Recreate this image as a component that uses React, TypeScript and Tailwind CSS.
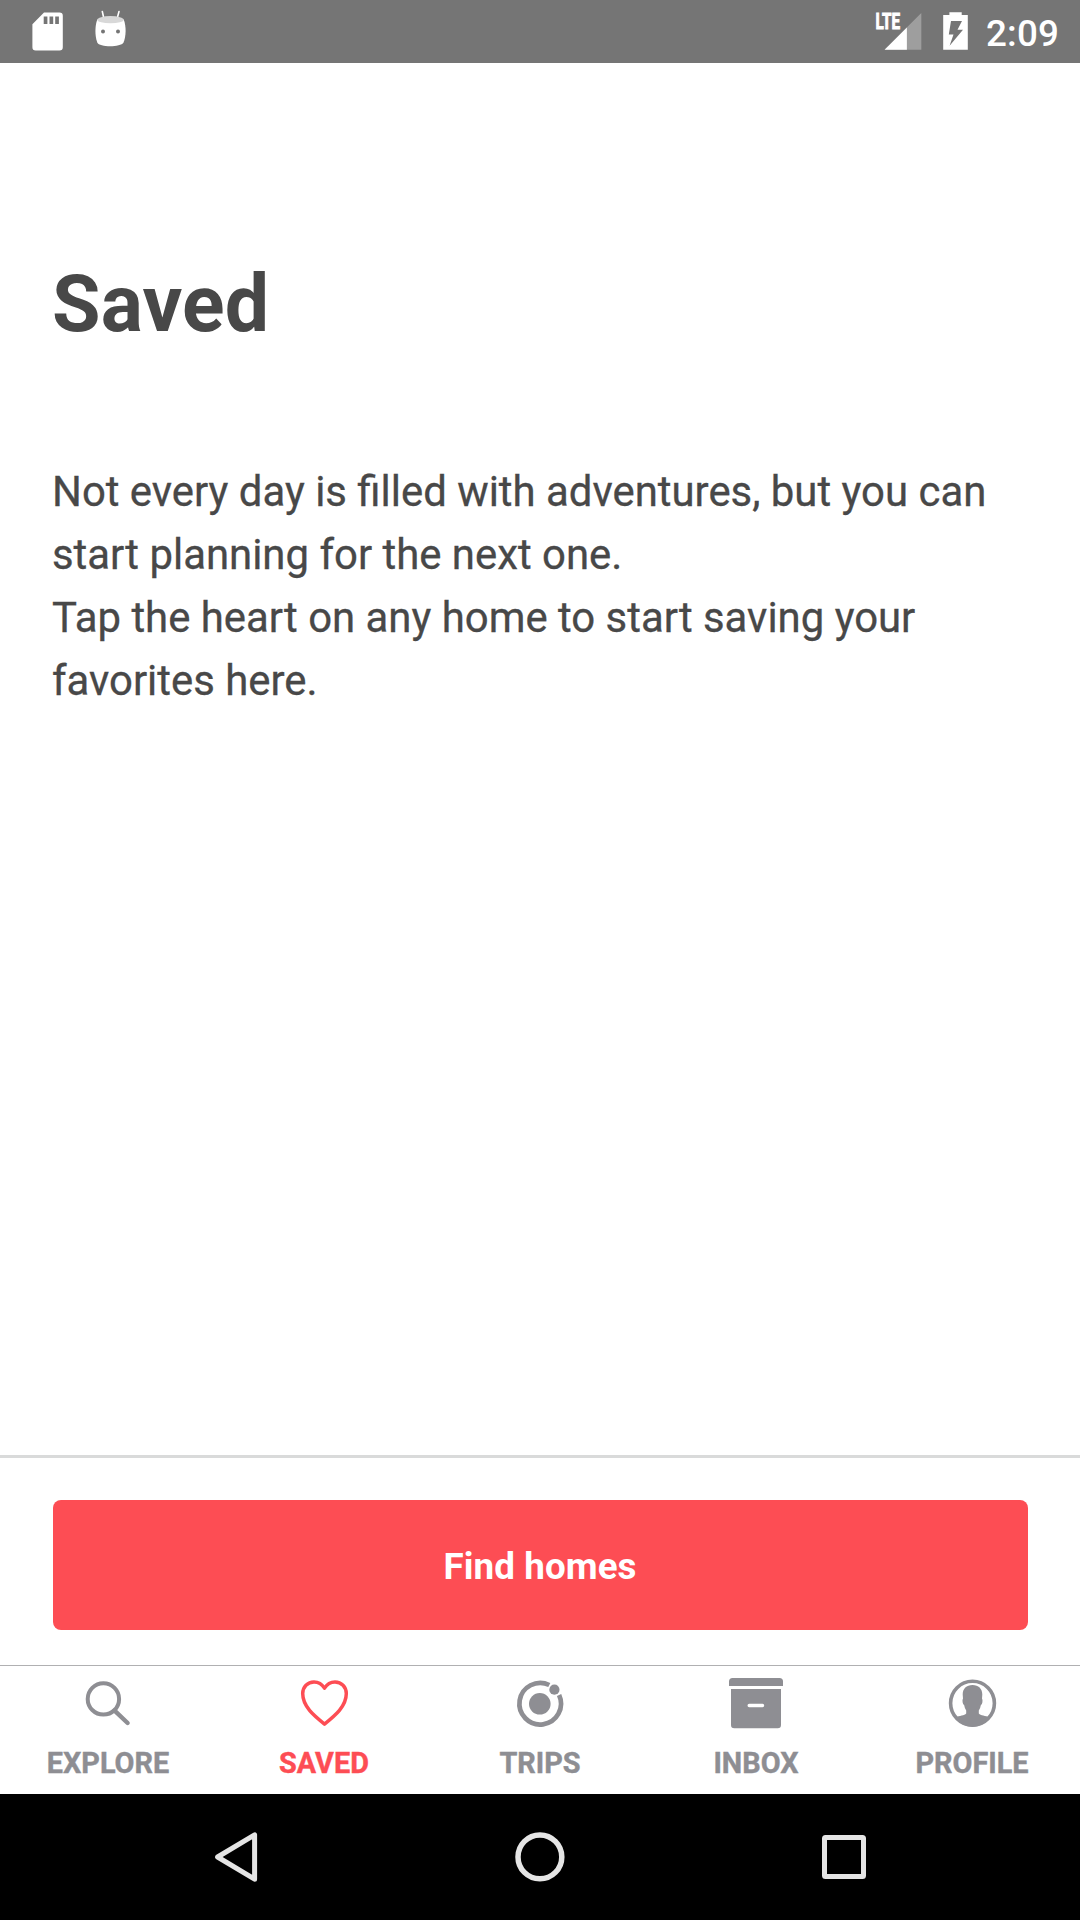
import type { ReactNode } from "react";

const SearchIcon = () => (
  <svg viewBox="0 0 64 64" className="size-16" fill="none" stroke="currentColor" strokeLinecap="round">
    <circle cx="27.4" cy="26.9" r="15.7" strokeWidth="4" />
    <path d="M38.6 38.6 51.6 51" strokeWidth="4.4" />
  </svg>
);

const HeartIcon = () => (
  <svg viewBox="0 0 64 64" className="size-16" fill="none" stroke="currentColor" strokeWidth="3.5" strokeLinejoin="round">
    <path d="M32.5 16.2C30.1 12.3 26.5 9.9 22 9.9 15.6 9.9 10.7 14.9 10.7 21.6c0 12.8 11 21.8 21.8 30.5 10.8-8.7 21.8-17.7 21.8-30.5C54.3 14.9 49.4 9.9 43 9.9c-4.5 0-8.1 2.4-10.5 6.3Z" />
  </svg>
);

const TripsIcon = () => (
  <svg viewBox="0 0 64 64" className="size-16" fill="currentColor">
    <path d="M41.3 13A20.8 20.8 0 1 0 51.1 23" fill="none" stroke="currentColor" strokeWidth="4.7" />
    <circle cx="31.8" cy="31.8" r="10.8" />
    <circle cx="46.4" cy="17.7" r="5.1" />
  </svg>
);

const InboxIcon = () => (
  <svg viewBox="0 0 64 64" className="size-16" fill="currentColor">
    <path d="M5 14V9.5Q5 6 8.5 6H55.5Q59 6 59 9.5V14Z" />
    <path
      fillRule="evenodd"
      d="M7 17H57V53Q57 56.3 53.7 56.3H10.3Q7 56.3 7 53ZM25.2 31.8a1.7 1.7 0 0 0 0 3.4H38.5a1.7 1.7 0 0 0 0-3.4Z"
    />
  </svg>
);

const ProfileIcon = () => (
  <svg viewBox="0 0 64 64" className="size-16" fill="currentColor">
    <circle cx="32.5" cy="31.2" r="21.9" fill="none" stroke="currentColor" strokeWidth="3.6" />
    <path d="M32.5 13C38.5 13 42.3 16.6 42.3 22.5L42 26.5Q42.8 27.5 42.4 30.2 42 32.7 40.8 33.2 40.3 36.5 38.8 38.6V41.4C40.5 43.4 45.5 43.6 49.7 45.3 46 51 40 54.8 32.5 54.8S19 51 15.3 45.3C19.5 43.6 24.5 43.4 26.2 41.4V38.6Q24.7 36.5 24.2 33.2 23 32.7 22.6 30.2 22.2 27.5 23 26.5L22.7 22.5C22.7 16.6 26.5 13 32.5 13Z" />
  </svg>
);

const tabs: { label: string; icon: ReactNode; active?: boolean }[] = [
  { label: "EXPLORE", icon: <SearchIcon /> },
  { label: "SAVED", icon: <HeartIcon />, active: true },
  { label: "TRIPS", icon: <TripsIcon /> },
  { label: "INBOX", icon: <InboxIcon /> },
  { label: "PROFILE", icon: <ProfileIcon /> },
];

function StatusBar() {
  return (
    <header className="flex h-[63px] shrink-0 items-start bg-[#757575] text-white">
      <svg width="63" height="63" viewBox="0 0 63 63" className="ml-4" fill="currentColor">
        <path
          fillRule="evenodd"
          d="M28 12.5H43.5Q46.8 12.5 46.8 15.8V47.2Q46.8 50.5 43.5 50.5H19.7Q16.4 50.5 16.4 47.2V24.2ZM27.7 16.6V24H31.4V16.6ZM33.5 16.6V24H37.2V16.6ZM39.2 16.6V24H42.9V16.6Z"
        />
      </svg>
      <svg width="63" height="63" viewBox="0 0 63 63" fill="none">
        <path d="M23.3 11.5 25 19M40 11.5 38 19" stroke="white" strokeWidth="1.6" strokeLinecap="round" />
        <path d="M18.3 19.5C15.8 26 15.8 36 18.3 42.5 20.5 47.6 41.5 47.6 44.5 42.5 47.3 36 47.3 26 44.7 19.5Z" fill="white" />
        <ellipse cx="31.5" cy="19.7" rx="13.2" ry="3.6" fill="#d8d8d8" />
        <circle cx="24" cy="31.5" r="2" fill="#757575" />
        <circle cx="39" cy="31.5" r="2" fill="#757575" />
      </svg>
      <div className="flex-1" />
      <svg width="50" height="63" viewBox="874 0 50 63">
        <path d="M921.3 13V49.7H884.6Z" fill="white" fillOpacity=".3" />
        <path d="M906.9 27.4V49.7H884.6Z" fill="white" />
        <text x="875.5" y="29" fill="white" stroke="white" strokeWidth="1" fontFamily="Roboto" fontWeight="700" fontSize="22" textLength="24.5" lengthAdjust="spacingAndGlyphs">
          LTE
        </text>
      </svg>
      <svg width="25" height="63" viewBox="943 0 25 63" className="ml-[19px]" fill="white">
        <path
          fillRule="evenodd"
          d="M943.2 15H949.4V12.2H961.7V15H967.8V49.8H943.2ZM951 21 948.8 34.5H953.5L949.6 45.8 963 29.7H957.5L962 21Z"
        />
      </svg>
      <span className="mt-[12px] mr-[21px] ml-[18.5px] text-[36.75px] leading-[43px] font-medium tracking-[0.15px]">2:09</span>
    </header>
  );
}

export default function App() {
  return (
    <div className="flex h-[1920px] w-[1080px] flex-col overflow-hidden bg-white font-['Roboto',sans-serif] text-[#484848]">
      <StatusBar />
      <main className="flex-1 px-[52px] pt-[195px]">
        <h1 className="text-[78.75px] leading-[92px] font-bold tracking-[0.2px]">Saved</h1>
        <p className="mt-[110px] text-[41.9px] leading-[63px] whitespace-nowrap [-webkit-text-stroke:0.3px_#484848]">
          Not every day is filled with adventures, but you can
          <br />
          start planning for the next one.
          <br />
          Tap the heart on any home to start saving your
          <br />
          favorites here.
        </p>
      </main>
      <section className="h-[210px] shrink-0 border-t-[3px] border-[#d9dada] pt-[42px] pr-[52px] pl-[53px]">
        <button className="flex h-[130px] w-full items-center justify-center rounded-lg bg-[#fd4d54] pt-[2px] pr-[1px] text-[36.75px] leading-[43px] font-bold tracking-[0.1px] text-white">
          Find homes
        </button>
      </section>
      <nav className="grid h-[129px] shrink-0 grid-cols-5 border-t border-[#b0b0b2]">
        {tabs.map((tab) => (
          <a key={tab.label} className={`flex flex-col items-center pt-[6px] ${tab.active ? "text-[#fd4d54]" : "text-[#8e8e93]"}`}>
            {tab.icon}
            <span className="mt-[10px] text-[28.875px] leading-[34px] font-bold [-webkit-text-stroke:0.4px_currentColor]">{tab.label}</span>
          </a>
        ))}
      </nav>
      <footer className="flex h-[126px] shrink-0 items-center justify-between bg-black px-[204px]">
        <svg width="64" height="64" viewBox="204 1825 64 64" fill="none" stroke="#e5e5e5" strokeWidth="5" strokeLinejoin="round">
          <path d="M254.6 1834.8V1879.2L217.6 1857Z" />
        </svg>
        <svg width="64" height="64" viewBox="508 1825 64 64" fill="none" stroke="#e5e5e5" strokeWidth="5.5">
          <circle cx="539.9" cy="1856.9" r="21.9" />
        </svg>
        <svg width="64" height="64" viewBox="812 1825 64 64" fill="none" stroke="#e5e5e5" strokeWidth="5">
          <rect x="824.5" y="1837.5" width="39" height="39" rx="1" />
        </svg>
      </footer>
    </div>
  );
}
